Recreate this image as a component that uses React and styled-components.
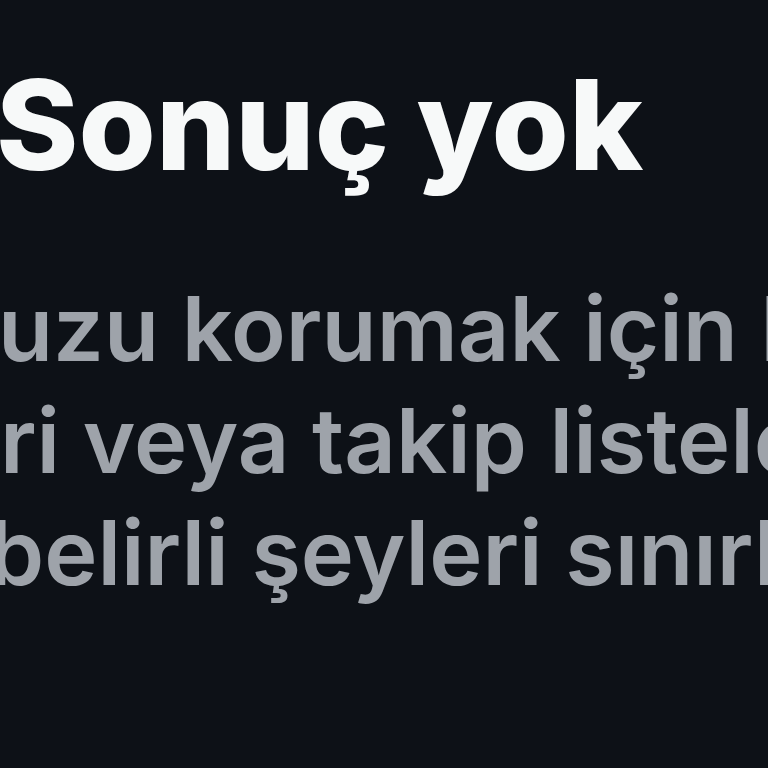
import React from 'react'
import styled, { createGlobalStyle } from 'styled-components'

const Global = createGlobalStyle`
    html, body {
        margin: 0;
        padding: 0;
        background-color: #0d1117;
    }
`

const Page = styled.div`
    width: 768px;
    height: 768px;
    overflow: hidden;
    background-color: #0d1117;
    font-family: 'Inter', 'Liberation Sans', sans-serif;
    display: flex;
    flex-direction: column;
`

const Title = styled.h1`
    margin: 0;
    padding-top: 50px;
    margin-left: ${props => props.shift || 0}px;
    font-size: 125px;
    line-height: 150px;
    font-weight: 800;
    letter-spacing: 0;
    color: #f7f9f9;
    white-space: nowrap;
`

const Message = styled.div`
    margin-top: 73px;
    display: flex;
    flex-direction: column;
`

const Line = styled.span`
    display: block;
    margin-left: ${props => props.shift || 0}px;
    font-size: 90px;
    line-height: 112px;
    font-weight: 600;
    color: #9ea3aa;
    white-space: nowrap;
`

const lines = [
    { text: 'uzu korumak için bazı', shift: -2 },
    { text: 'ri veya takip listeleri', shift: 0 },
    { text: 'belirli şeyleri sınırlı', shift: -12 },
]

const App = () => {
    return (
        <Page>
            <Global />
            <Title shift={-4}>Sonuç yok</Title>
            <Message>
                {lines.map(l => <Line key={l.text} shift={l.shift}>{l.text}</Line>)}
            </Message>
        </Page>
    )
}

export default App
